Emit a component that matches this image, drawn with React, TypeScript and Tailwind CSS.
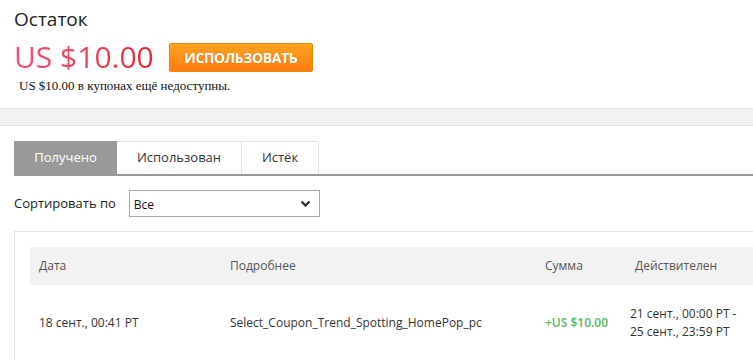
/** Coupon balance page: remaining amount, tabs, sort filter and coupon table. */

const tabs = [
  { label: "Получено", w: "w-[103px]" },
  { label: "Использован", w: "w-[125px]" },
  { label: "Истёк", w: "w-[77px]" },
];

function ChevronDown() {
  return (
    <svg width="11" height="8" viewBox="0 0 11 8" className="text-[#333]">
      <path d="M1.5 1.5 L5.5 5.5 L9.5 1.5" fill="none" stroke="currentColor" strokeWidth="2.4" />
    </svg>
  );
}

export default function App() {
  return (
    <div className="h-[360px] w-[753px] overflow-hidden bg-white font-['Open_Sans',sans-serif] text-[#333]">
      {/* Balance */}
      <div className="px-[14px] pt-[7px]">
        <h2 className="text-[19px] leading-[24px] text-[#222]">Остаток</h2>
        <div className="mt-[8px] flex items-center">
          <span className="bg-gradient-to-r from-[#f0527a] to-[#e8262f] bg-clip-text text-[30px] leading-[36px] text-transparent">
            US $10.00
          </span>
          <button className="ml-[15px] h-[29px] w-[144px] rounded-[2px] border border-[#e8860c] bg-gradient-to-b from-[#ffa31f] to-[#ff7c11] text-[14px] font-bold tracking-[-0.4px] text-white [text-shadow:0_0_1px_rgba(150,70,0,0.5)]">
            ИСПОЛЬЗОВАТЬ
          </button>
        </div>
        <p className="ml-[5px] mt-[3px] font-['Liberation_Serif',serif] text-[13px] leading-[16px] text-[#111]">
          US $10.00 в купонах ещё недоступны.
        </p>
      </div>

      {/* Divider band */}
      <div className="mt-[14px] h-[18px] border-y border-[#e3e3e3] bg-[#f2f2f2]" />

      {/* Tabs */}
      <div className="ml-[14px] mt-[15px] flex border-b-2 border-[#999]">
        {tabs.map((t, i) => (
          <div
            key={t.label}
            className={
              i === 0
                ? `flex h-[33px] ${t.w} items-center justify-center bg-[#999] text-[13px] text-white`
                : `flex h-[33px] ${t.w} items-center justify-center border-r border-t border-[#e5e5e5] text-[13px] text-[#333]`
            }
          >
            {t.label}
          </div>
        ))}
      </div>

      {/* Sort */}
      <div className="ml-[14px] mt-[14px] flex items-center">
        <span className="text-[13px] text-[#222]">Сортировать по</span>
        <div className="ml-[13px] flex h-[27px] w-[191px] items-center justify-between border border-[#aaa] pl-[4px] pr-[8px] text-[12px] text-[#111]">
          <span className="mt-[3px]">Все</span>
          <ChevronDown />
        </div>
      </div>

      {/* Table card */}
      <div className="ml-[14px] mt-[14px] border-l border-t border-[#e5e5e5] pl-[15px] pt-[15px]">
        <div className="flex h-[38px] items-center bg-[#f2f2f2] text-[12px] text-[#555]">
          <div className="w-[200px] shrink-0 pl-[9px]">Дата</div>
          <div className="w-[315px] shrink-0">Подробнее</div>
          <div className="w-[90px] shrink-0">Сумма</div>
          <div className="w-[140px] shrink-0">Действителен</div>
        </div>
        <div className="flex h-[76px] items-center text-[12px] text-[#333]">
          <div className="w-[200px] shrink-0 pl-[9px]">18 сент., 00:41 PT</div>
          <div className="w-[315px] shrink-0">Select_Coupon_Trend_Spotting_HomePop_pc</div>
          <div className="w-[85px] shrink-0 font-semibold text-[#5cb85c]">+US $10.00</div>
          <div className="w-[140px] shrink-0 leading-[18px]">
            <div>21 сент., 00:00 PT -</div>
            <div>25 сент., 23:59 PT</div>
          </div>
        </div>
      </div>
    </div>
  );
}
